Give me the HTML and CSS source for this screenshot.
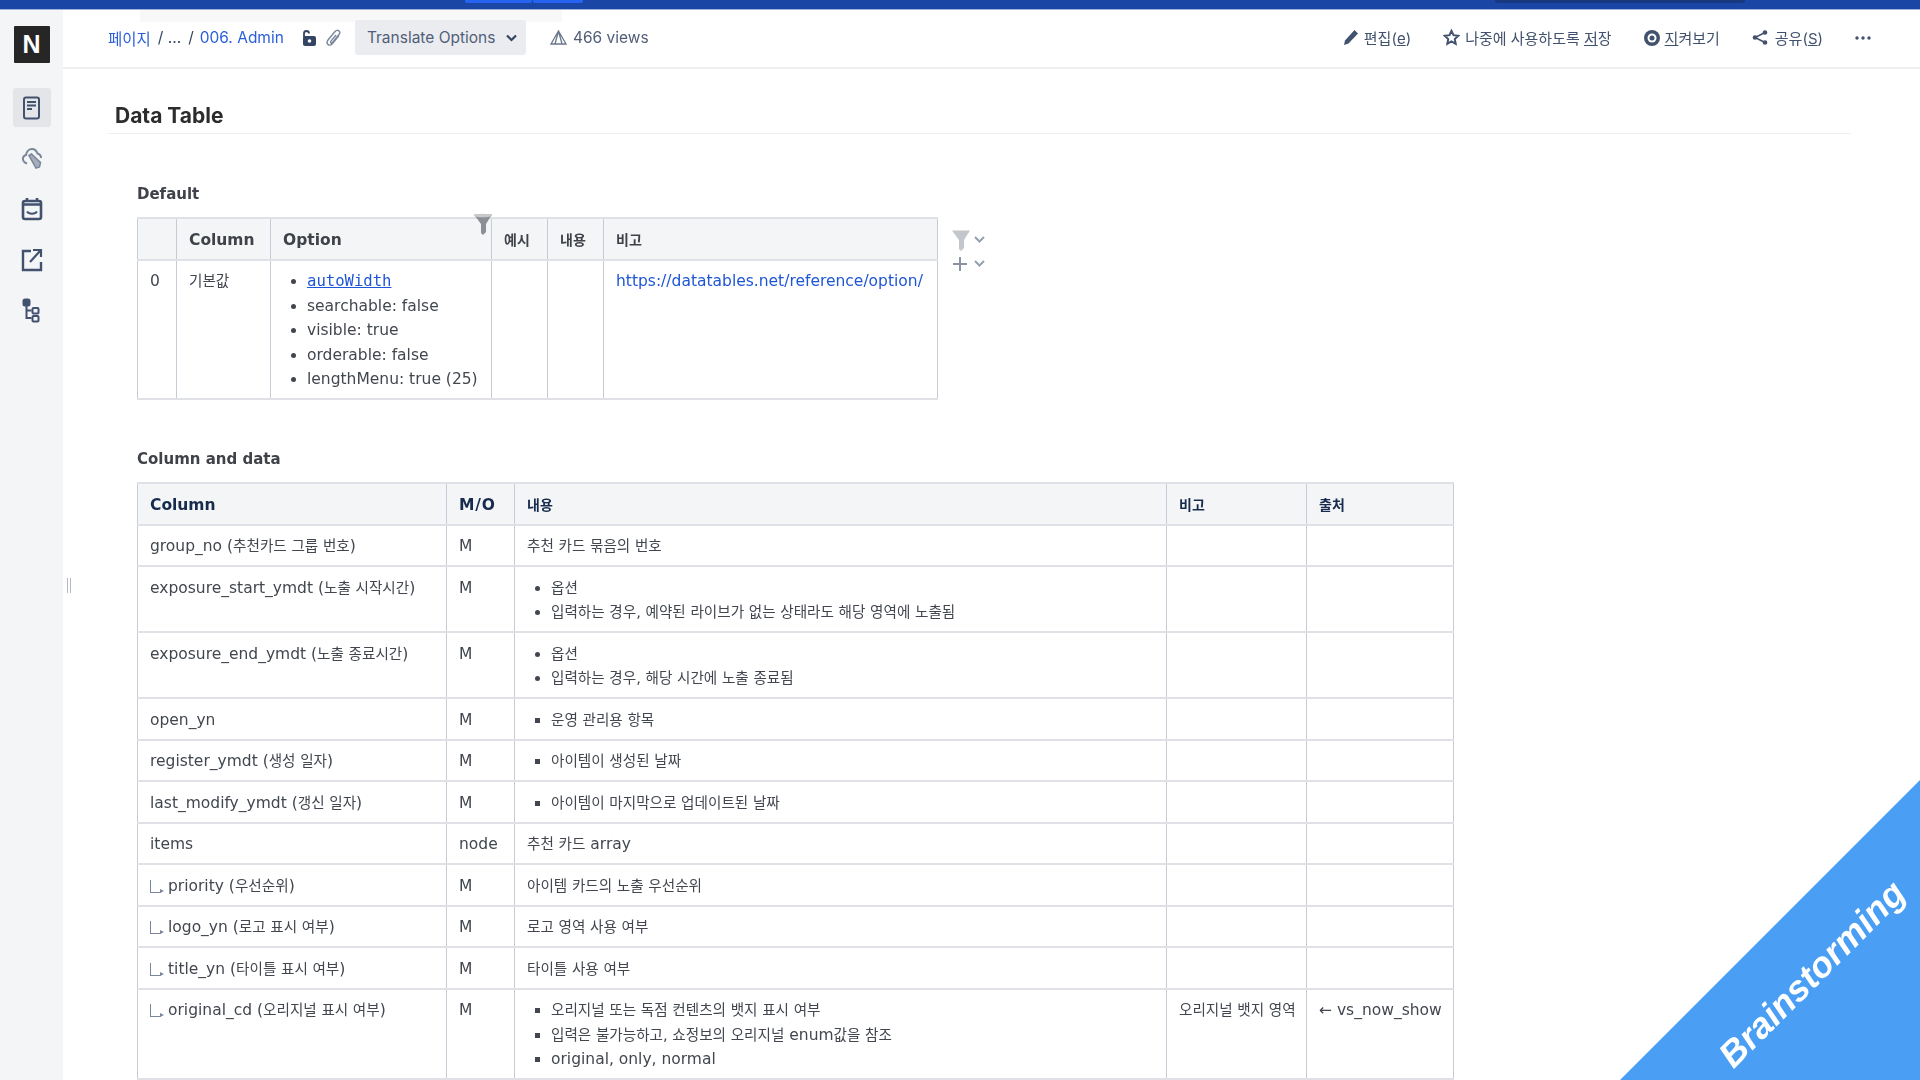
FILE: index.html
```html
<!DOCTYPE html>
<html lang="ko">
<head>
<meta charset="utf-8">
<title>Data Table</title>
<link rel="stylesheet" href="styles.css">
</head>
<body>
<div class="topbar">
  <div class="tabs"><span class="tab tab-a"></span><span class="tab tab-b"></span></div>
  <span class="tab-dark"></span>
</div>
<div class="app">
  <nav class="sidebar">
    <div class="logo">N</div>
    <a class="side-item active"><svg width="20" height="24" viewBox="0 0 20 24" fill="none" stroke="#42526e" stroke-width="2"><rect x="2" y="1.5" width="15" height="21" rx="2"/><path d="M5 6h9M5 9.5h9M5 13h5" stroke-width="1.8"/></svg></a>
    <a class="side-item"><svg width="22" height="24" viewBox="0 0 22 24" fill="none" stroke="#7a8699" stroke-width="2"><path d="M6 17.500C3 16.500 1.500 14 2 12c.4-1.700 1.700-2.800 3-3 .5-3.500 3-6 6-6 2.500 0 4.500 1.600 5.500 4.500 1.800.5 3.500 2 3.500 4.500"/><path d="M8 9.500l2.500-1.500 9 8.500-1 4.500-3.500 1z" fill="#a5adba" stroke="#7a8699" stroke-width="1.500"/></svg></a>
    <a class="side-item"><svg width="22" height="24" viewBox="0 0 22 24" fill="none" stroke="#42526e" stroke-width="2.600"><rect x="2" y="4" width="18" height="18" rx="2"/><path d="M2 7.500h18M6 1v4M16 1v4" /><path d="M6 14.500c2 3 8 3 10 0" stroke-width="2"/></svg></a>
    <a class="side-item"><svg width="22" height="24" viewBox="0 0 22 24" fill="none" stroke="#42526e" stroke-width="2.400"><path d="M10 3H2v19h18v-8"/><path d="M9 14L19 3M12 2h8v7" stroke-width="2.200"/></svg></a>
    <a class="side-item"><svg width="20" height="26" viewBox="0 0 20 26" fill="none" stroke="#42526e" stroke-width="2"><rect x="1.500" y="1.500" width="6" height="6" rx="1.500" fill="#42526e"/><path d="M4.500 7v13h5M4.500 12.500h5"/><rect x="10.500" y="10" width="6" height="5.500" rx="1"/><rect x="10.500" y="18" width="6" height="5.500" rx="1"/></svg></a>
  </nav>
  <span class="handle"></span>
  <main class="main">
    <span class="ghost"></span>
    <header class="header">
      <div class="crumbs">
        <a>페이지</a><span class="sep">/ ...</span><span class="sep">/</span><a>006. Admin</a>
        <svg class="lock" width="17" height="18" viewBox="0 0 17 18" fill="#344563"><path d="M3 8V4.500a2.500 2.500 0 0 1 5 0" fill="none" stroke="#344563" stroke-width="1.800"/><rect x="2" y="7" width="13" height="10" rx="2"/><circle cx="8.500" cy="12" r="1.800" fill="#fff"/></svg>
        <svg class="clip" width="15" height="18" viewBox="0 0 15 18" fill="none" stroke="#7a869a" stroke-width="1.400"><path d="M13 6.500l-6.500 8c-1.500 2-3.500 2-4.500 1S.8 12.500 2.200 10.700L9 2.500c1.200-1.400 3-1.500 4-.6s1 2.400 0 3.600l-6.500 8c-.8 1-1.900.7-1.900-.3 0-.5.2-.9.500-1.300L10 6"/></svg>
        <button class="translate">Translate Options<svg width="11" height="8" viewBox="0 0 11 8" fill="none" stroke="#344563" stroke-width="2.200"><path d="M1 1.500l4.500 4.500L10 1.500"/></svg></button>
        <span class="views"><svg width="17" height="15" viewBox="0 0 17 15" fill="none" stroke="#6b778c" stroke-width="1.300"><path d="M8.500 1L16 14H1zM8.500 1L5 14M8.500 1L12 14"/></svg>466 views</span>
      </div>
      <div class="actions">
        <a><svg width="16" height="17" viewBox="0 0 16 17" fill="#42526e"><path d="M11.500 1l3.500 3.500-9.500 10L1 16l1-4.500z"/></svg><span>편집(<u>e</u>)</span></a>
        <a><svg width="17" height="17" viewBox="0 0 17 17" fill="none" stroke="#42526e" stroke-width="2"><path d="M8.500 1.800l2 4.400 4.800.6-3.500 3.300.9 4.800-4.200-2.400-4.200 2.400.9-4.800L1.700 6.800l4.800-.6z"/></svg><span>나중에 사용하도록 <u>저</u>장</span></a>
        <a><svg width="16" height="16" viewBox="0 0 16 16"><circle cx="8" cy="8" r="8" fill="#42526e"/><circle cx="8" cy="8" r="4.500" fill="#fff"/><circle cx="8" cy="8" r="2.500" fill="#42526e"/></svg><span><u>지</u>켜보기</span></a>
        <a class="share"><svg width="16" height="17" viewBox="0 0 16 17" fill="#42526e" stroke="#42526e" stroke-width="1.500"><path d="M13 3.500L3 8.500l10 5" fill="none"/><circle cx="13" cy="3.500" r="1.600"/><circle cx="3" cy="8.500" r="1.600"/><circle cx="13" cy="13.500" r="1.600"/></svg><span>공유(<u>S</u>)</span></a>
        <a class="more"><svg width="16" height="4" viewBox="0 0 16 4" fill="#42526e"><circle cx="2" cy="2" r="1.700"/><circle cx="8" cy="2" r="1.700"/><circle cx="14" cy="2" r="1.700"/></svg></a>
      </div>
    </header>
    <div class="page">
      <h1>Data Table</h1>
      <section class="body">
        <h3 class="first">Default</h3>
        <div class="table-wrap">
          <table class="t1">
            <colgroup><col class="c1"><col class="c2"><col class="c3"><col class="c4"><col class="c5"><col class="c6"></colgroup>
            <tr><th></th><th>Column</th><th>Option</th><th class="ko">예시</th><th class="ko">내용</th><th class="ko">비고</th></tr>
            <tr>
              <td>0</td><td><span class="k">기본값</span></td>
              <td><ul><li><a class="code">autoWidth</a></li><li>searchable: false</li><li>visible: true</li><li>orderable: false</li><li>lengthMenu: true (25)</li></ul></td>
              <td></td><td></td><td><a class="link">https://datatables.net/reference/option/</a></td>
            </tr>
          </table>
          <svg class="funnel f-a" width="20" height="22" viewBox="0 0 20 22"><path d="M1 1.500h18l-6 9.500v8l-3 3-2-2v-9z" fill="#8c8f96"/><ellipse cx="10" cy="2.500" rx="9" ry="1.800" fill="#c7c9cc"/></svg>
          <div class="tools">
            <span><svg width="20" height="22" viewBox="0 0 20 22"><path d="M1 1.500h18l-6 9.500v8l-3 3-2-2v-9z" fill="#c3c6cb"/></svg><svg width="11" height="7" viewBox="0 0 11 7" fill="none" stroke="#97a0af" stroke-width="2"><path d="M1 1l4.500 4.500L10 1"/></svg></span>
            <span><svg class="plus" width="16" height="16" viewBox="0 0 16 16" stroke="#8993a4" stroke-width="2"><path d="M8 1v14M1 8h14"/></svg><svg width="11" height="7" viewBox="0 0 11 7" fill="none" stroke="#97a0af" stroke-width="2"><path d="M1 1l4.500 4.500L10 1"/></svg></span>
          </div>
        </div>
        <h3>Column and data</h3>
        <table class="t2">
          <colgroup><col class="d1"><col class="d2"><col class="d3"><col class="d4"><col class="d5"></colgroup>
          <tr><th>Column</th><th class="mo">M/O</th><th class="ko">내용</th><th class="ko">비고</th><th class="ko">출처</th></tr>
          <tr><td>group_no (<span class="k">추천카드 그룹 번호</span>)</td><td>M</td><td><span class="k">추천 카드 묶음의 번호</span></td><td></td><td></td></tr>
          <tr><td>exposure_start_ymdt (<span class="k">노출 시작시간</span>)</td><td>M</td><td><ul><li><span class="k">옵션</span></li><li><span class="k">입력하는 경우, 예약된 라이브가 없는 상태라도 해당 영역에 노출됨</span></li></ul></td><td></td><td></td></tr>
          <tr><td>exposure_end_ymdt (<span class="k">노출 종료시간</span>)</td><td>M</td><td><ul><li><span class="k">옵션</span></li><li><span class="k">입력하는 경우, 해당 시간에 노출 종료됨</span></li></ul></td><td></td><td></td></tr>
          <tr><td>open_yn</td><td>M</td><td><ul class="sq"><li><span class="k">운영 관리용 항목</span></li></ul></td><td></td><td></td></tr>
          <tr><td>register_ymdt (<span class="k">생성 일자</span>)</td><td>M</td><td><ul class="sq"><li><span class="k">아이템이 생성된 날짜</span></li></ul></td><td></td><td></td></tr>
          <tr><td>last_modify_ymdt (<span class="k">갱신 일자</span>)</td><td>M</td><td><ul class="sq"><li><span class="k">아이템이 마지막으로 업데이트된 날짜</span></li></ul></td><td></td><td></td></tr>
          <tr><td>items</td><td>node</td><td><span class="k">추천 카드</span> array</td><td></td><td></td></tr>
          <tr><td><span class="sub">priority (<span class="k">우선순위</span>)</span></td><td>M</td><td><span class="k">아이템 카드의 노출 우선순위</span></td><td></td><td></td></tr>
          <tr><td><span class="sub">logo_yn (<span class="k">로고 표시 여부</span>)</span></td><td>M</td><td><span class="k">로고 영역 사용 여부</span></td><td></td><td></td></tr>
          <tr><td><span class="sub">title_yn (<span class="k">타이틀 표시 여부</span>)</span></td><td>M</td><td><span class="k">타이틀 사용 여부</span></td><td></td><td></td></tr>
          <tr><td><span class="sub">original_cd (<span class="k">오리지널 표시 여부</span>)</span></td><td>M</td><td><ul class="sq"><li><span class="k">오리지널 또는 독점 컨텐츠의 뱃지 표시 여부</span></li><li><span class="k">입력은 불가능하고, 쇼정보의 오리지널</span> enum<span class="k">값을 참조</span></li><li>original, only, normal</li></ul></td><td><span class="k">오리지널 뱃지 영역</span></td><td>← vs_now_show</td></tr>
        </table>
      </section>
    </div>
  </main>
</div>
<div class="ribbon"><span>Brainstorming</span></div>
</body>
</html>
```
FILE: styles.css
```css
* { box-sizing: border-box; }
html, body { margin: 0; height: 1080px; overflow: hidden; }
body { font-family: Inter, "Noto Sans CJK KR", sans-serif; font-size: 15.5px; color: #42474f; background: #fff; position: relative; filter: blur(.45px); }

.topbar { height: 10px; background: #1a47a5; border-bottom: 1px solid #9db3dd; display: flex; position: relative; }
.tabs { display: flex; margin-left: 465px; height: 3px; gap: 1px; }
.tab { background: #2563f0; border-radius: 0 0 2px 2px; }
.tab-a { width: 67px; }
.tab-b { width: 50px; }
.tab-dark { width: 250px; height: 3px; margin-left: 912px; background: #17377f; border-radius: 0 0 3px 3px; }

.app { display: flex; height: 1070px; }
.sidebar { width: 63px; flex: none; background: #f4f5f7; display: flex; flex-direction: column; align-items: center; padding-top: 16px; }
.logo { width: 36px; height: 37px; background: #262626; color: #fff; font-family: "Liberation Sans", sans-serif; font-weight: 700; font-size: 25px; display: flex; align-items: center; justify-content: center; border-radius: 1px; margin-bottom: 25px; }
.side-item { width: 38px; height: 39px; margin-bottom: 12px; display: flex; align-items: center; justify-content: center; border-radius: 3px; }
.side-item.active { background: #e3e5e9; margin-bottom: 11px; }

.handle { position: absolute; left: 67px; top: 578px; width: 4px; height: 15px; border-left: 1px solid #b3bac5; border-right: 1px solid #b3bac5; }

.main { flex: 1; min-width: 0; position: relative; }
.ghost { position: absolute; left: 77px; top: 0; width: 422px; height: 12px; background: #f8f8f8; }

.header { height: 59px; padding: 0 49px 0 45px; border-bottom: 2px solid #efefef; display: flex; align-items: center; justify-content: space-between; color: #42526e; position: relative; }
.crumbs, .actions { display: flex; align-items: center; }
.crumbs a { color: #2b5fd9; }
.crumbs { font-size: 15.500px; margin-top: -2px; }
.sep { color: #344563; margin-left: 7px; margin-right: 7px; }
.sep + .sep { margin-left: 0; margin-right: 6px; }
.lock { margin-left: 17px; }
.clip { margin-left: 8px; }
.translate { margin: 0 0 0 14px; height: 35px; width: 171px; padding: 0 9px 0 12px; border: 0; border-radius: 3px; background: #ebecf0; color: #505f79; font: inherit; display: flex; align-items: center; justify-content: space-between; }
.views { margin-left: 24px; display: flex; align-items: center; gap: 6px; color: #505f79; }
.actions { font-size: 15px; margin-top: -2px; }
.actions a { display: flex; align-items: center; gap: 5px; margin-left: 32px; color: #42526e; }
.actions a.share { gap: 7px; }
.actions a.more { margin-left: 32px; }

.page { padding-left: 45px; }
h1 { margin: 32px 0 0; height: 33px; width: 1743px; padding: 0 0 4px 7px; border-bottom: 1px solid #efefef; font-size: 21px; line-height: 30px; font-weight: 700; color: #2c2c2c; }
.body { padding-left: 29px; font-family: "DejaVu Sans", "Noto Sans CJK KR", sans-serif; font-size: 15.500px; }
h3 { margin: 47px 0 11px; font-size: 15px; line-height: 24px; font-weight: 700; color: #3f4349; }
h3.first { margin-top: 48px; }
.table-wrap { position: relative; }
.k { font-size: 14.600px; line-height: 1; }

table { border-collapse: collapse; table-layout: fixed; line-height: 24.500px; }
th, td { border: 1px solid #c6cbd5; border-top: 2px solid #dfe1e6; border-bottom: 2px solid #dfe1e6; padding: 8.500px 12px 6.500px; text-align: left; vertical-align: top; overflow: visible; white-space: nowrap; }
th { background: #f4f5f7; font-weight: 700; color: #3f4349; }
.t1 { width: 800px; }
.c1 { width: 39px; } .c2 { width: 94px; } .c3 { width: 221px; } .c4 { width: 56px; } .c5 { width: 56px; } .c6 { width: 334px; }
.t2 { width: 1316px; }
.t2 th { color: #172b4d; }
.d1 { width: 309px; } .d2 { width: 68px; } .d3 { width: 652px; } .d4 { width: 140px; } .d5 { width: 147px; }
th.ko { font-size: 14px; }
th.mo { letter-spacing: .8px; }
ul { margin: 0; padding: 0 0 0 24px; }
ul.sq { list-style-type: square; }
.code { font-family: "DejaVu Sans Mono", monospace; font-size: 15.600px; color: #1f56d6; text-decoration: underline; }
.link { color: #1f56d6; }
.sub { display: inline-block; padding-left: 18px; position: relative; }
.sub::before { content: ""; position: absolute; left: 0; top: 6px; width: 10px; height: 12px; border-left: 1px solid #7a869a; border-bottom: 1px solid #7a869a; }
.sub::after { content: ""; position: absolute; left: 10px; top: 15px; border-left: 4px solid #7a869a; border-top: 2.500px solid transparent; border-bottom: 2.500px solid transparent; }

.funnel { position: absolute; }
.f-a { left: 336px; top: -4px; }
.tools { position: absolute; left: 814px; top: 12px; display: flex; flex-direction: column; gap: 3px; }
.tools span { display: flex; align-items: center; gap: 3px; height: 21px; }
.plus { margin: 0 3px 0 1px; }

.ribbon { position: absolute; right: 0; bottom: 0; width: 300px; height: 300px; background: #4a9ff5; clip-path: polygon(100% 0, 100% 100%, 0 100%); overflow: hidden; }
.ribbon span { position: absolute; left: 192px; top: 194px; transform: translate(-50%, -50%) rotate(-45deg); font: italic 700 36px "Liberation Sans", sans-serif; color: #fff; white-space: nowrap; }
```
